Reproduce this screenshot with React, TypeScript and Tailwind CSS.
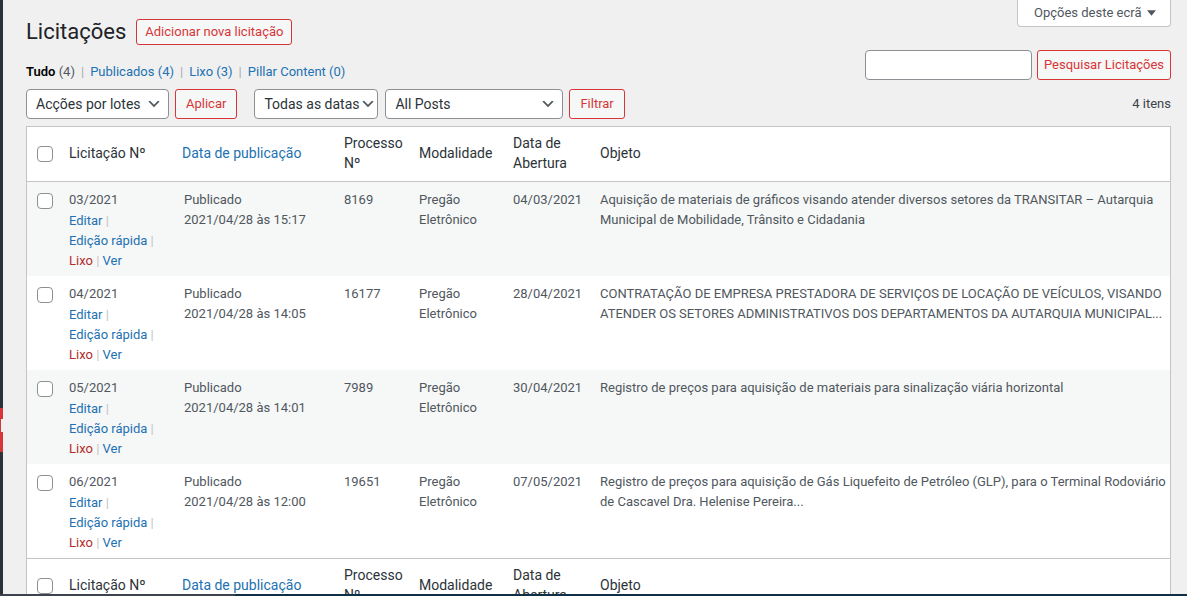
import React from "react";

type Row = {
  num: string;
  time: string;
  proc: string;
  abertura: string;
  objeto: string[];
};

const rows: Row[] = [
  {
    num: "03/2021",
    time: "2021/04/28 às 15:17",
    proc: "8169",
    abertura: "04/03/2021",
    objeto: [
      "Aquisição de materiais de gráficos visando atender diversos setores da TRANSITAR – Autarquia",
      "Municipal de Mobilidade, Trânsito e Cidadania",
    ],
  },
  {
    num: "04/2021",
    time: "2021/04/28 às 14:05",
    proc: "16177",
    abertura: "28/04/2021",
    objeto: [
      "CONTRATAÇÃO DE EMPRESA PRESTADORA DE SERVIÇOS DE LOCAÇÃO DE VEÍCULOS, VISANDO",
      "ATENDER OS SETORES ADMINISTRATIVOS DOS DEPARTAMENTOS DA AUTARQUIA MUNICIPAL...",
    ],
  },
  {
    num: "05/2021",
    time: "2021/04/28 às 14:01",
    proc: "7989",
    abertura: "30/04/2021",
    objeto: ["Registro de preços para aquisição de materiais para sinalização viária horizontal"],
  },
  {
    num: "06/2021",
    time: "2021/04/28 às 12:00",
    proc: "19651",
    abertura: "07/05/2021",
    objeto: [
      "Registro de preços para aquisição de Gás Liquefeito de Petróleo (GLP), para o Terminal Rodoviário",
      "de Cascavel Dra. Helenise Pereira...",
    ],
  },
];

const cols = "grid grid-cols-[32px_115px_160px_75px_94px_87px_1fr]";

function Chevron() {
  return (
    <svg viewBox="0 0 20 20" className="w-4 h-4 shrink-0" fill="#50575e">
      <path d="M5 6l5 5 5-5 2 1-7 7-7-7 2-1z" />
    </svg>
  );
}

function Select({ label, width }: { label: string; width: string }) {
  return (
    <div
      className={`flex items-center justify-between h-[30px] ${width} pl-[9px] pr-[6px] border border-[#8c8f94] rounded-[4px] bg-white text-[14px] text-[#2c3338]`}
    >
      <span className="whitespace-nowrap">{label}</span>
      <Chevron />
    </div>
  );
}

function RedButton({ children, className = "" }: { children: React.ReactNode; className?: string }) {
  return (
    <button
      className={`h-[30px] px-[10px] border border-[#d63638] rounded-[3px] bg-[#f6f7f7] text-[13px] text-[#d63638] whitespace-nowrap ${className}`}
    >
      {children}
    </button>
  );
}

function Check() {
  return <span className="block w-4 h-4 border border-[#8c8f94] rounded-[4px] bg-white" />;
}

function HeadRow({ top }: { top?: boolean }) {
  return (
    <div
      className={`${cols} h-[55px] text-[14px] leading-[19.6px] text-[#2c3338] ${top ? "border-b" : "border-t"} border-[#c3c4c7]`}
    >
      <div className="flex items-center pl-[10px]">
        <Check />
      </div>
      <div className="flex items-center pl-[10px]">Licitação Nº</div>
      <div className="flex items-center pl-[8px] text-[#2271b1]">Data de publicação</div>
      <div className="flex items-center pl-[10px]">
        Processo
        <br />
        Nº
      </div>
      <div className="flex items-center pl-[10px]">Modalidade</div>
      <div className="flex items-center pl-[10px]">
        Data de
        <br />
        Abertura
      </div>
      <div className="flex items-center pl-[10px]">Objeto</div>
    </div>
  );
}

function Sep() {
  return <span className="text-[#c3c4c7]"> |</span>;
}

function DataRow({ row, striped }: { row: Row; striped: boolean }) {
  return (
    <div
      className={`${cols} h-[94px] text-[13px] leading-[19.5px] text-[#50575e] ${striped ? "bg-[#f6f7f7]" : "bg-white"}`}
    >
      <div className="pt-[11px] pl-[10px]">
        <Check />
      </div>
      <div className="pt-[8px] pl-[10px]">
        <div>{row.num}</div>
        <div className="pt-[1px] whitespace-nowrap">
          <div>
            <span className="text-[#2271b1]">Editar</span>
            <Sep />
          </div>
          <div className="pt-[1px]">
            <span className="text-[#2271b1]">Edição rápida</span>
            <Sep />
          </div>
          <div>
            <span className="text-[#b32d2e]">Lixo</span>
            <span className="text-[#c3c4c7]"> | </span>
            <span className="text-[#2271b1]">Ver</span>
          </div>
        </div>
      </div>
      <div className="pt-[8px] pl-[10px]">
        <div>Publicado</div>
        <div>{row.time}</div>
      </div>
      <div className="pt-[8px] pl-[10px]">{row.proc}</div>
      <div className="pt-[8px] pl-[10px]">
        <div>Pregão</div>
        <div>Eletrônico</div>
      </div>
      <div className="pt-[8px] pl-[10px]">{row.abertura}</div>
      <div className="pt-[8px] pl-[10px] pr-[4px] whitespace-nowrap overflow-hidden">
        {row.objeto.map((line) => (
          <div key={line}>{line}</div>
        ))}
      </div>
    </div>
  );
}

export default function App() {
  return (
    <div className="h-[596px] w-[1187px] overflow-hidden flex flex-col bg-[#f0f0f1] font-['Segoe_UI',Roboto,'Liberation_Sans',sans-serif]">
      <div className="flex flex-1 min-h-0">
        {/* admin menu edge */}
        <aside className="w-[3px] shrink-0 bg-[#2c3338] flex flex-col">
          <div className="h-[408px]" />
          <div className="h-[11px] bg-[#d63638]" />
          <div className="h-[13px] flex">
            <div className="w-[1px] bg-[#d63638]" />
            <div className="flex-1 bg-[#f0f0f1]" />
          </div>
          <div className="h-[20px] bg-[#d63638]" />
        </aside>

        <main className="flex-1 min-w-0 pl-[23px] pr-[16px] overflow-hidden">
          {/* header */}
          <div className="flex justify-between items-start">
            <div>
              <div className="flex items-center h-[30px] mt-[17px]">
                <h1 className="text-[22px] text-[#1d2327] leading-[30px] mr-[10px]">Licitações</h1>
                <button className="h-[26px] px-[8px] border border-[#d63638] rounded-[3px] bg-[#f6f7f7] text-[13px] text-[#d63638]">
                  Adicionar nova licitação
                </button>
              </div>
              <div className="mt-[15px] h-[20px] leading-[20px] text-[13px] text-[#50575e] whitespace-nowrap">
                <span className="font-semibold text-black">Tudo</span> (4)
                <span className="text-[#a7aaad] px-[6px]">|</span>
                <span className="text-[#2271b1]">Publicados</span> <span className="text-[#2271b1]">(4)</span>
                <span className="text-[#a7aaad] px-[6px]">|</span>
                <span className="text-[#2271b1]">Lixo</span> <span className="text-[#2271b1]">(3)</span>
                <span className="text-[#a7aaad] px-[6px]">|</span>
                <span className="text-[#2271b1]">Pillar Content</span> <span className="text-[#2271b1]">(0)</span>
              </div>
            </div>

            <div className="flex flex-col items-end">
              <div className="flex items-center justify-between w-[154px] h-[27px] pl-[16px] pr-[14px] bg-white border border-t-0 border-[#c3c4c7] rounded-b-[4px] text-[13px] text-[#50575e]">
                <span className="whitespace-nowrap">Opções deste ecrã</span>
                <svg viewBox="0 0 10 6" className="w-[9px] h-[6px] shrink-0" fill="#50575e">
                  <polygon points="0,0 10,0 5,6" />
                </svg>
              </div>
              <div className="flex gap-[5px] mt-[23px]">
                <input className="w-[167px] h-[30px] border border-[#8c8f94] rounded-[4px] bg-white" />
                <RedButton className="w-[134px] !px-0">Pesquisar Licitações</RedButton>
              </div>
            </div>
          </div>

          {/* filters */}
          <div className="flex items-center mt-[7px] h-[30px]">
            <Select label="Acções por lotes" width="w-[143px]" />
            <div className="ml-[6px]">
              <RedButton>Aplicar</RedButton>
            </div>
            <div className="ml-[17px]">
              <Select label="Todas as datas" width="w-[124px]" />
            </div>
            <div className="ml-[7px]">
              <Select label="All Posts" width="w-[178px]" />
            </div>
            <div className="ml-[6px]">
              <RedButton>Filtrar</RedButton>
            </div>
            <span className="ml-auto text-[13px] text-[#3c434a]">4 itens</span>
          </div>

          {/* table */}
          <div className="mt-[7px] border border-[#c3c4c7] bg-white">
            <HeadRow top />
            {rows.map((r, i) => (
              <DataRow key={r.num} row={r} striped={i % 2 === 0} />
            ))}
            <HeadRow />
          </div>
        </main>
      </div>
      <div className="h-[2px] shrink-0 flex">
        <div className="w-[235px] bg-[#3c434a]" />
        <div className="flex-1 bg-[#0f2f44]" />
      </div>
    </div>
  );
}
